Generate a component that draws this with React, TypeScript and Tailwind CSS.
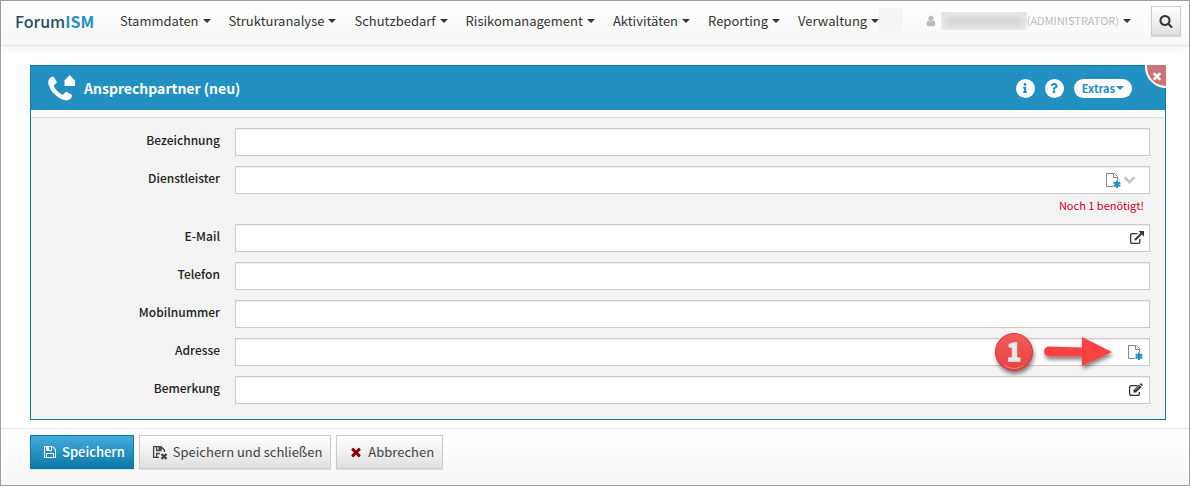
import React from 'react'
import { FaInfo, FaQuestion } from 'react-icons/fa'

type IconProps = { className?: string }

const PATHS = {
  times:
    'M1490 1322q0 40-28 68l-136 136q-28 28-68 28t-68-28l-294-294-294 294q-28 28-68 28t-68-28l-136-136q-28-28-28-68t28-68l294-294-294-294q-28-28-28-68t28-68l136-136q28-28 68-28t68 28l294 294 294-294q28-28 68-28t68 28l136 136q28 28 28 68t-28 68l-294 294 294 294q28 28 28 68z',
  search:
    'M1216 832q0-185-131.5-316.5t-316.5-131.5-316.5 131.5-131.5 316.5 131.5 316.5 316.5 131.5 316.5-131.5 131.5-316.5zm512 832q0 52-38 90t-90 38q-54 0-90-38l-343-342q-179 124-399 124-143 0-273.5-55.5t-225-150-150-225-55.5-273.5 55.5-273.5 150-225 225-150 273.5-55.5 273.5 55.5 225 150 150 225 55.5 273.5q0 220-124 399l343 343q37 37 37 90z',
  save:
    'M512 1536h768v-384h-768v384zm896 0h128v-896q0-14-10-38.5t-20-34.5l-281-281q-10-10-34-20t-39-10v416q0 40-28 68t-68 28h-576q-40 0-68-28t-28-68v-416h-128v1280h128v-416q0-40 28-68t68-28h832q40 0 68 28t28 68v416zm-384-928v-320q0-13-9.5-22.5t-22.5-9.5h-192q-13 0-22.5 9.5t-9.5 22.5v320q0 13 9.5 22.5t22.5 9.5h192q13 0 22.5-9.5t9.5-22.5zm640 32v928q0 40-28 68t-68 28h-1344q-40 0-68-28t-28-68v-1344q0-40 28-68t68-28h928q40 0 88 20t76 48l280 280q28 28 48 76t20 88z',
  phone:
    'M1600 1240q0 27-10 70.5t-21 68.5q-21 50-122 106-94 51-186 51-27 0-53-3.5t-57.5-12.5-47-14.5-55.5-20.5-49-18q-98-35-175-83-127-79-264-216t-216-264q-48-77-83-175-3-9-18-49t-20.5-55.5-14.5-47-12.5-57.5-3.5-53q0-92 51-186 56-101 106-122 25-11 68.5-21t70.5-10q14 0 21 3 18 6 53 76 11 19 30 54t35 63.5 31 53.5q3 4 17.5 25t21.5 35.5 7 28.5q0 20-28.5 50t-62 55-62 53-28.5 46q0 9 5 22.5t8.5 20.5 14 24 11.5 19q76 137 174 235t235 174q2 1 19 11.5t24 14 20.5 8.500 22.500 5q18 0 46-28.500t53-62 55-62 50-28.500q14 0 28.500 7t35.500 21.500 25 17.500q25 15 53.500 31t63.500 35 54 30q70 35 76 53 3 7 3 21z',
  user:
    'M1536 1399q0 109-62.500 187t-150.500 78h-854q-88 0-150.500-78t-62.500-187q0-85 8.500-160.500t31.500-152 58.500-131 94-89 134.500-34.500q131 128 313 128t313-128q76 0 134.500 34.500t94 89 58.500 131 31.500 152 8.500 160.500zm-256-887q0 159-112.500 271.500t-271.500 112.500-271.500-112.500-112.500-271.500 112.500-271.500 271.500-112.500 271.500 112.500 112.500 271.500z',
}

const Icon: React.FC<IconProps & { name: keyof typeof PATHS }> = ({ name, className }) => (
  <svg viewBox="0 0 1792 1792" fill="currentColor" className={className} aria-hidden="true">
    <path d={PATHS[name]} />
  </svg>
)

const Caret: React.FC = () => (
  <span className="inline-block border-x-4 border-t-4 border-x-transparent border-t-current" />
)

const NewFileIcon: React.FC = () => (
  <svg viewBox="0 0 16 16" className="size-4" fill="none" aria-hidden="true">
    <path d="M7 14.500H0.500V1.500H8.500L11.500 4.500V8M7.500 1.500V5.500H11.500" stroke="#888" />
    <path d="M11 8.500V16M7.700 10.400L14.300 14.100M14.300 10.400L7.700 14.100" stroke="#2290c1" strokeWidth="2.200" />
  </svg>
)

const LinkIcon: React.FC = () => (
  <svg viewBox="0 0 16 14" className="h-3.5 w-4" fill="none" stroke="#333" aria-hidden="true">
    <path d="M9.500 2.600H4.500Q2.600 2.600 2.600 4.500V10.500Q2.600 12.400 4.500 12.400H10Q11.900 12.400 11.900 10.500V8" strokeWidth="1.300" />
    <path d="M7 9L13.500 2.500" strokeWidth="2" />
    <path d="M10.500 0H16V5.500Z" fill="#333" stroke="none" />
  </svg>
)

const EditIcon: React.FC = () => (
  <svg viewBox="0 0 16 14" className="h-3.5 w-4" fill="none" stroke="#333" aria-hidden="true">
    <path d="M9.500 2.600H3.500Q1.600 2.600 1.600 4.500V10.500Q1.600 12.400 3.500 12.400H9.500Q11.400 12.400 11.400 10.500V9" strokeWidth="1.300" />
    <path d="M5.500 9.500V7L11 1.500L13.500 4L8 9.500Z" fill="#333" stroke="none" />
    <path d="M11.700 1L12.500 0.400Q13 0 13.500 0.500L14.500 1.500Q15 2 14.600 2.500L14 3.200Z" fill="#333" stroke="none" />
    <path d="M7.200 7L11.300 3" stroke="#ccc" strokeWidth="0.800" />
  </svg>
)

const ChevronIcon: React.FC = () => (
  <svg viewBox="0 0 12 8" className="h-2 w-3" fill="none" stroke="#c4c4c4" strokeWidth="2.400" aria-hidden="true">
    <path d="M0.500 1.200L5.500 6.200L10.500 1.200" />
  </svg>
)

const Marker: React.FC = () => (
  <div className="pointer-events-none absolute -top-2 right-6 flex items-center">
    <svg viewBox="0 0 134 50" className="h-[50px] w-[134px]" aria-hidden="true">
      <defs>
        <filter id="marker-shadow" x="-20%" y="-20%" width="140%" height="150%">
          <feDropShadow dx="1" dy="3" stdDeviation="2" floodColor="#000" floodOpacity="0.5" />
        </filter>
        <linearGradient id="marker-fill" x1="0" y1="0" x2="0" y2="1">
          <stop offset="0" stopColor="#f45a5a" />
          <stop offset="1" stopColor="#e64343" />
        </linearGradient>
      </defs>
      <g filter="url(#marker-shadow)">
        <circle cx="22" cy="22" r="18.500" fill="url(#marker-fill)" stroke="#c23c3c" />
        <path d="M57 16.500L90 17.500V7L120 22L90 36V26.500H57A5 5 0 0 1 57 16.500Z" fill="#fb4242" />
      </g>
      <path d="M12 35Q22 42 32 35" fill="none" stroke="#f28080" />
      <text
        x="22"
        y="31"
        textAnchor="middle"
        stroke="#e8e8e8"
        strokeWidth="1.500"
        className="fill-[#e8e8e8] font-['Noto_Sans_CJK_SC'] text-2xl font-bold"
      >
        1
      </text>
    </svg>
  </div>
)

const menu = [
  'Stammdaten',
  'Strukturanalyse',
  'Schutzbedarf',
  'Risikomanagement',
  'Aktivitäten',
  'Reporting',
  'Verwaltung',
]

type FieldDef = {
  id: string
  label: string
  hint?: string
  addon?: React.ReactNode
  marker?: boolean
}

const addonButton = (label: string, icon: React.ReactNode) => (
  <button type="button" aria-label={label}>{icon}</button>
)

const fields: FieldDef[] = [
  { id: 'bezeichnung', label: 'Bezeichnung' },
  {
    id: 'dienstleister',
    label: 'Dienstleister',
    hint: 'Noch 1 benötigt!',
    addon: (
      <div className="flex items-center gap-0.5 pr-2">
        {addonButton('Dienstleister anlegen', <NewFileIcon />)}
        {addonButton('Dienstleister wählen', <ChevronIcon />)}
      </div>
    ),
  },
  { id: 'email', label: 'E-Mail', addon: addonButton('E-Mail öffnen', <LinkIcon />) },
  { id: 'telefon', label: 'Telefon' },
  { id: 'mobil', label: 'Mobilnummer' },
  { id: 'adresse', label: 'Adresse', addon: addonButton('Adresse anlegen', <NewFileIcon />), marker: true },
  { id: 'bemerkung', label: 'Bemerkung', addon: addonButton('Bemerkung bearbeiten', <EditIcon />) },
]

const Field: React.FC<{ field: FieldDef }> = ({ field }) => (
  <div className="flex">
    <label htmlFor={field.id} className="w-1/6 pt-0.5 text-right text-xs leading-5 font-medium text-[#222]">
      {field.label}
    </label>
    <div className="min-w-0 flex-1 px-[15px]">
      <div className="relative">
        <input
          id={field.id}
          type="text"
          className="block h-7 w-full border border-[#ccc] bg-white px-2 text-xs shadow-[inset_0_1px_1px_rgba(0,0,0,0.075)] outline-none"
        />
        {field.addon && (
          <div className="absolute inset-y-0 right-1.5 flex items-center">{field.addon}</div>
        )}
        {field.marker && <Marker />}
      </div>
      {field.hint && (
        <p className="pt-0.5 pr-1.5 text-right text-[11px] leading-[18px] text-[#d0002b]">{field.hint}</p>
      )}
    </div>
  </div>
)

const buttonBase =
  'flex h-[34px] items-center gap-[5px] border pr-2 pl-3 text-[13px] shadow-[0_1px_1px_rgba(0,0,0,0.1)]'
const buttonLight = 'border-[#ccc] bg-linear-to-b from-white to-[#e0e0e0] text-[#444]'

const App: React.FC = () => {
  return (
    <div className="flex min-h-screen flex-col border border-[#a0a0a0] bg-white font-['Noto_Sans_CJK_SC',sans-serif] text-[#333]">
      <header className="flex h-[45px] items-center border-b border-[#e4e4e4] bg-linear-to-b from-white to-[#f7f7f7] pr-2 pb-[5px] pl-3.5 shadow-[0_1px_8px_rgba(0,0,0,0.08)]">
        <a href="#" className="text-base leading-6 font-medium text-[#254f63]">
          Forum<span className="font-bold text-[#2290c1]">ISM</span>
        </a>
        <nav className="ml-[26px] flex items-center gap-[18px] text-[13px]">
          {menu.map((item) => (
            <button key={item} type="button" className="flex items-center gap-1">
              {item}
              <Caret />
            </button>
          ))}
        </nav>
        <span className="h-[25px] w-6 bg-[#f4f4f4]" />
        <button type="button" className="ml-auto flex items-center text-[11px] text-[#bbb]" aria-label="Benutzer">
          <Icon name="user" className="mr-1 size-3" />
          <span className="flex h-[18px] w-[86px] items-center overflow-hidden bg-[#e9e9e9] px-1">
            <span className="h-2 w-full bg-[#d2d2d2] blur-[3px]" />
          </span>
          (ADMINISTRATOR)
          <span className="ml-1 flex text-[#333]"><Caret /></span>
        </button>
        <button
          type="button"
          aria-label="Suche"
          className="ml-5 flex size-[30px] shrink-0 items-center justify-center border border-[#ccc] bg-linear-to-b from-white to-[#e0e0e0] shadow-[0_1px_1px_rgba(0,0,0,0.1)]"
        >
          <Icon name="search" className="size-3.5" />
        </button>
      </header>

      <main className="px-[29px] pt-[19px] pb-2 sm:pr-[23px]">
        <section className="relative border border-[#0b79a9] bg-[#f3f3f3]">
          <div className="flex h-11 items-center bg-[#2290c1] pr-[33px] pl-[17px] text-white">
            <svg viewBox="0 0 28 28" className="size-7" fill="currentColor" aria-hidden="true">
              <g transform="translate(-3 0.500) scale(0.0168)">
                <path d={PATHS.phone} />
              </g>
              <path d="M16.500 6.500L21.700 1L27 6.500V12H16.500Z" />
            </svg>
            <h1 className="ml-2 flex-1 text-sm font-bold">Ansprechpartner (neu)</h1>
            <div className="flex items-center gap-2.5 text-[#2290c1]">
              <button type="button" aria-label="Info" className="flex size-[19px] items-center justify-center rounded-full bg-white">
                <FaInfo className="size-2.5" />
              </button>
              <button type="button" aria-label="Hilfe" className="flex size-[19px] items-center justify-center rounded-full bg-white">
                <FaQuestion className="size-2.5" />
              </button>
              <button type="button" className="flex h-[19px] items-center gap-px rounded-full bg-white px-2 text-[11px] font-bold">
                Extras
                <Caret />
              </button>
            </div>
          </div>
          <button
            type="button"
            aria-label="Schließen"
            className="absolute -top-px -right-px flex h-[23px] w-[21px] items-center justify-center rounded-bl-full border-b-2 border-l-2 border-white bg-[#cb7478] text-white"
          >
            <Icon name="times" className="size-3" />
          </button>
          <div className="h-2 border-b border-[#ddd] bg-[#fbfbfb]" />
          <form className="flex flex-col gap-2.5 pt-2.5 pb-[15px]">
            {fields.map((field) => (
              <Field key={field.id} field={field} />
            ))}
          </form>
        </section>
      </main>

      <footer className="flex flex-1 gap-[5px] border-t border-[#e4e4e4] bg-linear-to-b from-white to-[#f7f7f7] px-[29px] pt-1.5 pb-4">
        <button
          type="button"
          className={`${buttonBase} border-[#0b79a9] bg-linear-to-b from-[#41acdc] to-[#0878a8] font-medium text-white`}
        >
          <Icon name="save" className="size-3.5" />
          Speichern
        </button>
        <button type="button" className={`${buttonBase} ${buttonLight}`}>
          <svg viewBox="0 0 16 16" className="size-4" fill="none" aria-hidden="true">
            <path d="M7 13.400H1.600V2.600H9L12.400 6V8M4.600 13V9.500H8M4.600 3V6.500H9V3" stroke="#444" strokeWidth="1.300" />
            <path d="M6.500 3H8.500V6H6.500Z" fill="#444" />
            <path d="M9.500 10L14.500 15M14.500 10L9.500 15" stroke="#444" strokeWidth="2.400" />
          </svg>
          Speichern und schließen
        </button>
        <button type="button" className={`${buttonBase} ${buttonLight}`}>
          <Icon name="times" className="size-3.5 text-[#8b0000]" />
          Abbrechen
        </button>
      </footer>
    </div>
  )
}

export default App
